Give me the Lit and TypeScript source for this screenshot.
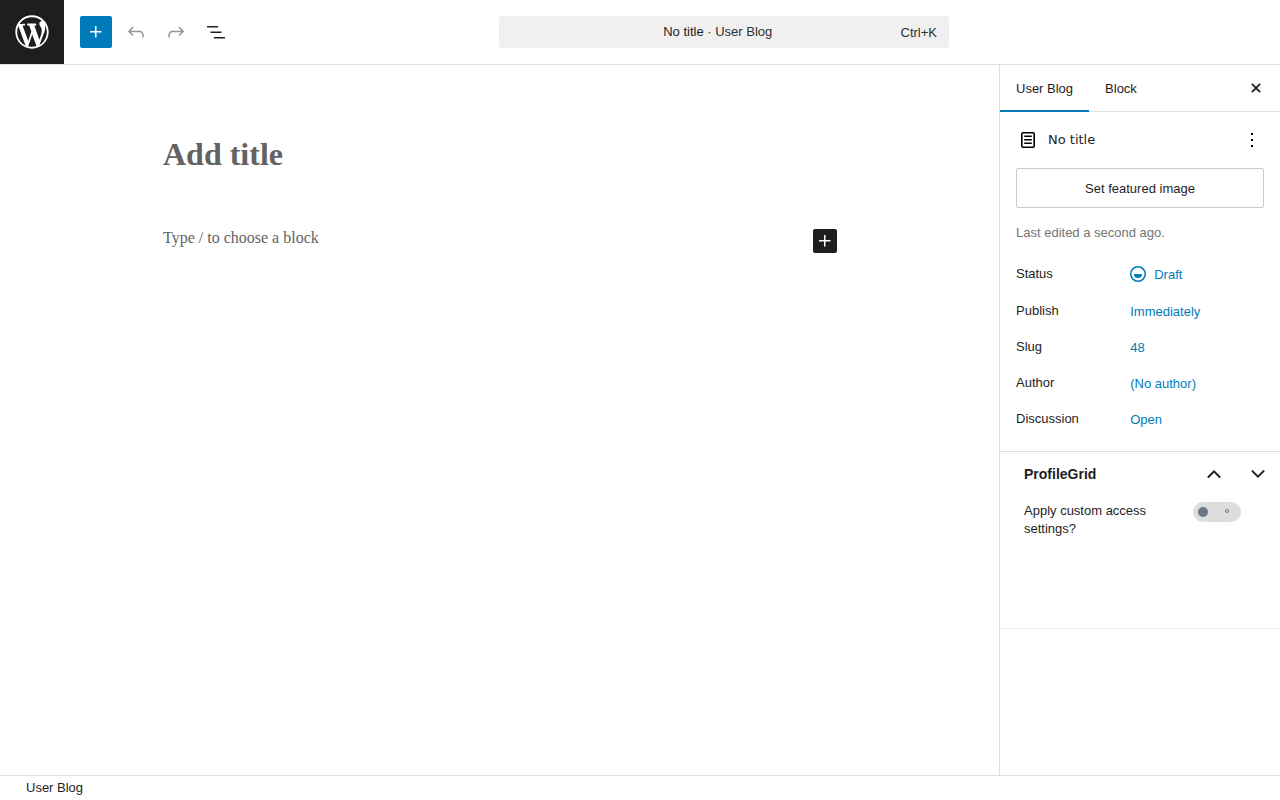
import { LitElement, html, css, svg } from "lit";
import { customElement, state } from "lit/decorators.js";

const icon = (body: unknown, size = 24) => html`<svg
  width=${size} height=${size} viewBox="0 0 24 24" fill="currentColor" aria-hidden="true">${body}</svg>`;

const icons = {
  plus: svg`<path d="M11 12.5V17.5H12.5V12.5H17.5V11H12.5V6H11V11H6V12.5H11Z"/>`,
  undo: svg`<path d="M18.3 11.7c-.6-.6-1.4-.9-2.3-.9H6.7l2.9-3.3-1.1-1-4.5 5L8.5 16l1-1-2.7-2.7H16c.5 0 .9.2 1.3.5 1 1 1 3.4 1 4.5v.3h1.5v-.2c0-1.5 0-4.3-1.5-5.7z"/>`,
  redo: svg`<path d="M15.6 6.5l-1.1 1 2.9 3.3H8c-.9 0-1.7.3-2.3.9-1.4 1.5-1.4 4.2-1.4 5.6v.2h1.5v-.3c0-1.1 0-3.5 1-4.5.3-.3.7-.5 1.3-.5h9.2L14.5 15l1.1 1.1 4.6-4.6-4.6-5z"/>`,
  outline: svg`<path d="M3 6h11v1.5H3V6Zm3.5 5.5h11V13h-11v-1.5ZM21 17H10v1.5h11V17Z"/>`,
  close: svg`<path d="M7.9 7.9l8.2 8.2M16.1 7.9l-8.2 8.2" fill="none" stroke="currentColor" stroke-width="1.8"/>`,
  page: svg`<path fill="#000" d="M8.2 7.5h7.6v1.6H8.2zM8.2 11h7.6v1.6H8.2zM8.2 14.5h7.6v1.6H8.2z"/><path fill="#000" fill-rule="evenodd" d="M17 4H7a2 2 0 0 0-2 2v12a2 2 0 0 0 2 2h10a2 2 0 0 0 2-2V6a2 2 0 0 0-2-2ZM7 5.6h10a.4.4 0 0 1 .4.4v12a.4.4 0 0 1-.4.4H7a.4.4 0 0 1-.4-.4V6a.4.4 0 0 1 .4-.4Z"/>`,
  more: svg`<path fill="#000" d="M13 19h-2v-2h2v2zm0-6h-2v-2h2v2zm0-6h-2V5h2v2z"/>`,
  draft: svg`<path fill-rule="evenodd" d="M12 18.5a6.5 6.5 0 1 1 0-13 6.5 6.5 0 0 1 0 13ZM4 12a8 8 0 1 1 16 0 8 8 0 0 1-16 0Zm8 4a4 4 0 0 0 4-4H8a4 4 0 0 0 4 4Z"/>`,
  up: svg`<path d="M6.4 15 12 9.4l5.6 5.6" fill="none" stroke="currentColor" stroke-width="2" stroke-linecap="round"/>`,
  down: svg`<path d="M6.4 9.1 12 14.7 17.6 9.1" fill="none" stroke="currentColor" stroke-width="2" stroke-linecap="round"/>`,
};

const wordpress = html`<svg width="40" height="40" viewBox="-2 -2 24 24" fill="#fff" aria-hidden="true">
  <path d="M20 10c0-5.51-4.49-10-10-10C4.48 0 0 4.49 0 10c0 5.52 4.48 10 10 10 5.51 0 10-4.48 10-10zM7.78 15.37L4.37 6.22c.55-.02 1.17-.08 1.17-.08.5-.06.44-1.13-.06-1.11 0 0-1.45.11-2.37.11-.18 0-.37 0-.58-.01C4.12 2.69 6.87 1.11 10 1.11c2.33 0 4.45.87 6.05 2.34-.68-.11-1.65.39-1.65 1.58 0 .74.45 1.36.9 2.1.35.61.55 1.36.55 2.46 0 1.49-1.4 5-1.4 5l-3.03-8.37c.54-.02.82-.17.82-.17.5-.05.44-1.25-.06-1.22 0 0-1.44.12-2.38.12-.87 0-2.33-.12-2.33-.12-.5-.03-.56 1.2-.06 1.22l.92.08 1.26 3.41zM17.41 10c.24-.64.74-1.87.43-4.25.7 1.29 1.05 2.71 1.05 4.25 0 3.29-1.73 6.24-4.4 7.78.97-2.59 1.94-5.2 2.92-7.78zM6.1 18.09C3.12 16.65 1.11 13.53 1.11 10c0-1.3.23-2.48.72-3.59C3.25 10.3 4.67 14.2 6.1 18.09zm4.03-6.63l2.58 6.98c-.86.29-1.76.45-2.71.45-.79 0-1.57-.11-2.29-.33.81-2.38 1.62-4.74 2.42-7.1z"/>
</svg>`;

const base = css`
  * { box-sizing: border-box; }
  button, input { font: inherit; color: inherit; margin: 0; padding: 0; border: 0; background: none; }
  button { cursor: pointer; }
  svg { display: block; flex: none; }
`;

@customElement("editor-header")
class EditorHeader extends LitElement {
  static styles = [base, css`
    :host { display: flex; align-items: center; height: 64px; border-bottom: 1px solid #ddd; background: #fff; }
    .logo { display: grid; place-items: center; width: 64px; height: 64px; background: #1e1e1e; }
    .tools { display: flex; gap: 8px; padding-left: 16px; }
    .tool { display: grid; place-items: center; width: 32px; height: 32px; border-radius: 2px; }
    .tool:disabled { color: #949494; cursor: default; }
    .primary { background: #007cba; color: #fff; }
    .center { flex: 1; display: flex; justify-content: center; padding-right: 64px; }
    .command { display: flex; align-items: center; width: 100%; max-width: 450px; height: 32px; padding: 0 12px 0 36px; border-radius: 4px; background: #f0f0f0; color: #2f2f2f; }
    .name { flex: 1; text-align: center; padding-bottom: 1px; }
    .doc { color: #1e1e1e; }
    .keys { padding-top: 1px; }
  `];
  render() {
    return html`
      <a class="logo" href="#" aria-label="View posts">${wordpress}</a>
      <div class="tools">
        <button class="tool primary" aria-label="Toggle block inserter">${icon(icons.plus)}</button>
        <button class="tool" disabled aria-label="Undo">${icon(icons.undo)}</button>
        <button class="tool" disabled aria-label="Redo">${icon(icons.redo)}</button>
        <button class="tool" aria-label="Document overview">${icon(icons.outline)}</button>
      </div>
      <div class="center">
        <button class="command">
          <span class="name"><span class="doc">No title</span> · User Blog</span>
          <span class="keys">Ctrl+K</span>
        </button>
      </div>`;
  }
}

@customElement("editor-canvas")
class EditorCanvas extends LitElement {
  static styles = [base, css`
    :host { display: block; padding: 64px 24px 0 25px; font-family: "Liberation Serif", serif; overflow: auto; }
    .content { max-width: 674px; margin: 0 auto; }
    .title { display: block; width: 100%; height: 50px; font-size: 32px; font-weight: 700; outline: 0; }
    .block { display: flex; justify-content: space-between; padding-top: 50px; }
    .paragraph { flex: 1; height: 18px; font-size: 16px; line-height: 18px; outline: 0; }
    input::placeholder { color: #626262; opacity: 1; }
    .add { display: grid; place-items: center; width: 24px; height: 24px; border-radius: 2px; background: #1e1e1e; color: #fff; }
  `];
  render() {
    return html`<div class="content">
      <input class="title" placeholder="Add title" aria-label="Add title">
      <div class="block">
        <input class="paragraph" placeholder="Type / to choose a block" aria-label="Empty block">
        <button class="add" aria-label="Add block">${icon(icons.plus)}</button>
      </div>
    </div>`;
  }
}

@customElement("editor-sidebar")
class EditorSidebar extends LitElement {
  @state() private tab = "User Blog";
  static styles = [base, css`
    :host { display: block; border-left: 1px solid #ddd; background: #fff; overflow: auto; }
    .tabs { display: flex; height: 47px; padding-right: 12px; align-items: flex-start; box-shadow: inset 0 -1px #ddd; }
    .tab { height: 47px; padding: 0 16px; }
    .active { box-shadow: inset 0 -2px #007cba; }
    .close { display: grid; place-items: center; height: 46px; margin-left: auto; }
    .summary { padding: 16px; border-bottom: 1px solid #ddd; }
    .card { display: flex; align-items: center; gap: 8px; height: 24px; font-family: "DejaVu Sans", sans-serif; }
    .card-name { flex: 1; margin: 0; padding-bottom: 2px; font-size: 13px; font-weight: 400; }
    .featured { display: block; width: 100%; height: 40px; margin: 16px 0; border: 1px solid #ccc; border-radius: 2px; }
    .edited { margin: 0; line-height: 18px; color: #757575; }
    .rows { margin: 16px 0 0; }
    .row { display: grid; grid-template-columns: 38% 1fr; gap: 8px; align-items: center; min-height: 32px; margin-bottom: 4px; }
    .row:first-child { margin-bottom: 5px; }
    .row:last-child { margin-bottom: 0; }
    .row dt { padding-bottom: 1px; }
    .row dd { display: flex; align-items: center; margin: 0; }
    .value { display: flex; align-items: center; gap: 4px; padding: 2px 0 1px 12px; color: #007cba; }
    .with-icon { padding: 0 0 0 8px; }
    .metabox { min-height: 177px; border-bottom: 1px solid #f0f0f0; }
    .box-head { display: flex; align-items: center; gap: 20px; height: 44px; padding: 0 10px 0 24px; color: #1d2327; }
    .box-name { flex: 1; margin: 0; font-size: 14px; font-weight: 700; color: #1e1e1e; }
    .setting { display: flex; align-items: flex-start; justify-content: space-between; padding: 6px 39px 0 24px; line-height: 18px; }
    .setting label { width: 144px; }
    .switch { appearance: none; display: flex; align-items: center; justify-content: space-between; width: 48px; height: 20px; padding: 0 12px 0 5px; border-radius: 10px; background: #ddd; }
    .switch::before { content: ""; width: 10px; height: 10px; border-radius: 50%; background: #6c7781; }
    .switch::after { content: ""; width: 2px; height: 2px; margin-bottom: 2px; border: 1px solid #6c7781; border-radius: 50%; }
    .switch:checked { flex-direction: row-reverse; padding: 0 5px 0 12px; }
  `];
  private row(label: string, value: string, glyph?: unknown) {
    return html`<div class="row"><dt>${label}</dt><dd>
      <button class="value ${glyph ? "with-icon" : ""}">${glyph ? icon(glyph) : ""}${value}</button>
    </dd></div>`;
  }
  render() {
    return html`
      <div class="tabs" role="tablist">
        ${["User Blog", "Block"].map((name) => html`<button role="tab"
          class="tab ${this.tab === name ? "active" : ""}"
          aria-selected=${this.tab === name} @click=${() => (this.tab = name)}>${name}</button>`)}
        <button class="close" aria-label="Close settings">${icon(icons.close)}</button>
      </div>
      <section class="summary">
        <div class="card">
          ${icon(icons.page)}
          <h2 class="card-name">No title</h2>
          <button aria-label="Actions">${icon(icons.more)}</button>
        </div>
        <button class="featured">Set featured image</button>
        <p class="edited">Last edited a second ago.</p>
        <dl class="rows">
          ${this.row("Status", "Draft", icons.draft)}
          ${this.row("Publish", "Immediately")}
          ${this.row("Slug", "48")}
          ${this.row("Author", "(No author)")}
          ${this.row("Discussion", "Open")}
        </dl>
      </section>
      <section class="metabox">
        <div class="box-head">
          <h2 class="box-name">ProfileGrid</h2>
          <button aria-label="Move up">${icon(icons.up)}</button>
          <button aria-label="Move down">${icon(icons.down)}</button>
        </div>
        <div class="setting">
          <label for="access">Apply custom access settings?</label>
          <input class="switch" id="access" type="checkbox">
        </div>
      </section>`;
  }
}

@customElement("app-root")
class AppRoot extends LitElement {
  static styles = css`
    :host { display: flex; flex-direction: column; height: 100vh; background: #fff; color: #1e1e1e; font-family: "Liberation Sans", Arial, sans-serif; font-size: 13px; }
    .body { flex: 1; min-height: 0; display: flex; }
    .canvas { flex: 1; min-width: 0; }
    .side { flex: none; width: 280px; box-sizing: content-box; }
    .footer { padding: 0 26px; border-top: 1px solid #ddd; line-height: 24px; }
  `;
  render() {
    return html`
      <editor-header></editor-header>
      <div class="body">
        <editor-canvas class="canvas"></editor-canvas>
        <editor-sidebar class="side"></editor-sidebar>
      </div>
      <footer class="footer">User Blog</footer>`;
  }
}
